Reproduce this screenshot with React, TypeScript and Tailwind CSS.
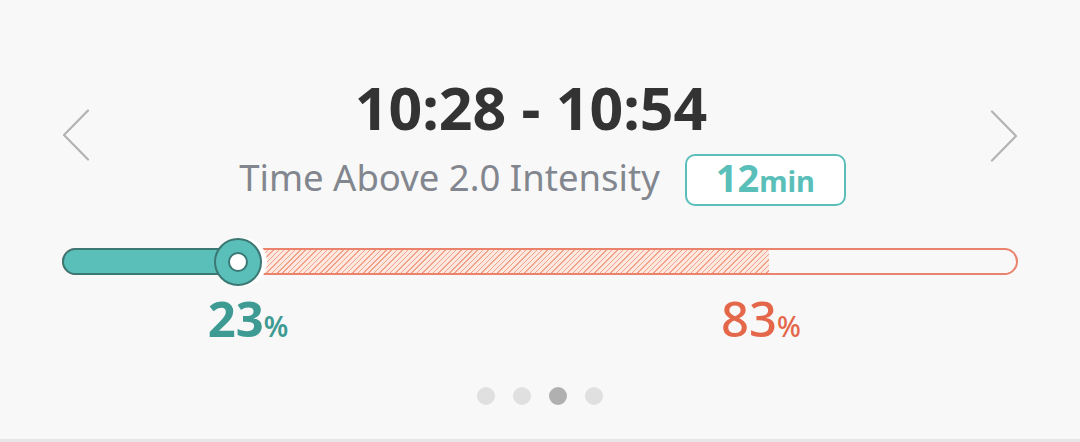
export default function App() {
  const font = { fontFamily: '"Noto Sans", "Open Sans", sans-serif' }

  return (
    <div className="w-[1080px] h-[442px] bg-[#f8f8f8] border-b-[3px] border-[#e6e6e6] flex flex-col" style={font}>
      {/* header */}
      <div className="flex justify-between px-[62px]">
        <svg className="mt-[109px]" width="28" height="52" viewBox="0 0 28 52" fill="none">
          <path d="M26 1.5 L2 26 L26 50.5" stroke="#b3b3b3" strokeWidth="2.2" strokeLinecap="round" strokeLinejoin="round" />
        </svg>

        <div className="flex-1 flex flex-col items-center pt-[78px]">
          <h1 className="mr-[18px] text-[59px] leading-none font-bold text-[#333333]">10:28 - 10:54</h1>
          <div className="ml-[5px] flex items-start gap-[25px] mt-[17px]">
            <span className="mt-[5px] text-[36.5px] leading-none text-[#82868e]">Time Above 2.0 Intensity</span>
            <div className="h-[52px] w-[161px] border-2 border-[#5bbfb9] rounded-[10px] bg-white flex items-center justify-center pb-[7px]">
              <span className="leading-none text-[#5bbfb9] font-bold">
                <span className="text-[38px]">12</span>
                <span className="text-[29px]">min</span>
              </span>
            </div>
          </div>
        </div>

        <svg className="mt-[110px]" width="28" height="52" viewBox="0 0 28 52" fill="none">
          <path d="M2 1.5 L26 26 L2 50.5" stroke="#b3b3b3" strokeWidth="2.2" strokeLinecap="round" strokeLinejoin="round" />
        </svg>
      </div>

      {/* bar */}
      <div className="mx-[62px] mt-[42px] relative h-[27px]">
        <div className="h-full border-2 border-[#eb826c] rounded-full flex overflow-hidden">
          <div className="w-[198px] shrink-0" />
          <div className="w-[507px] shrink-0 bg-[repeating-linear-gradient(135deg,#f2a28b_0px,#f2a28b_1px,#fde8df_1px,#fde8df_3.8px)]" />
        </div>
        <div className="absolute left-0 top-0 h-[27px] w-[178px] border-2 border-[#3b7874] bg-[#5bbfb9] rounded-full" />
        <div className="absolute left-[152px] top-[-10px] w-[48px] h-[48px] rounded-full border-2 border-[#3b7874] bg-[#5bbfb9] shadow-[5px_0_0_0_#ffffff] flex items-center justify-center">
          <div className="w-[20px] h-[20px] rounded-full bg-white border-2 border-[#3b7874]" />
        </div>
      </div>

      {/* values */}
      <div className="mx-[62px] mt-[19px] flex">
        <div className="ml-[106px] w-[160px] flex justify-center items-baseline leading-none text-[#3e9b94] font-bold">
          <span className="text-[49px]">23</span>
          <span className="text-[28px] font-semibold">%</span>
        </div>
        <div className="ml-[353px] w-[160px] flex justify-center items-baseline leading-none text-[#e4674a] font-medium">
          <span className="text-[49px]">83</span>
          <span className="text-[28px]">%</span>
        </div>
      </div>

      {/* pager */}
      <div className="mt-[44px] flex justify-center gap-[18px]">
        <span className="w-[18px] h-[18px] rounded-full bg-[#e0e0e0]" />
        <span className="w-[18px] h-[18px] rounded-full bg-[#e0e0e0]" />
        <span className="w-[18px] h-[18px] rounded-full bg-[#b0b0b0]" />
        <span className="w-[18px] h-[18px] rounded-full bg-[#e0e0e0]" />
      </div>
    </div>
  )
}
